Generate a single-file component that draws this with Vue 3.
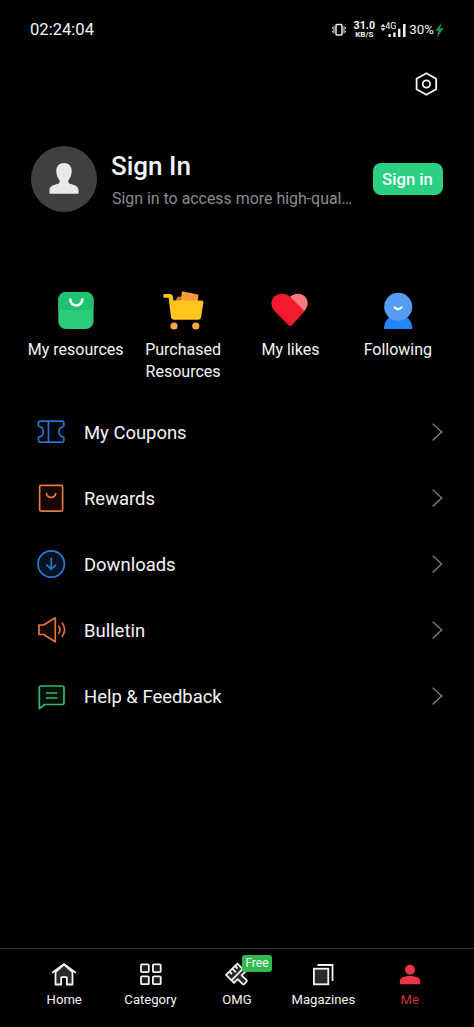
<script setup>
const shortcuts = [
  { id: 'resources', label: 'My resources' },
  { id: 'purchased', label: 'Purchased Resources' },
  { id: 'likes', label: 'My likes' },
  { id: 'following', label: 'Following' },
]
const menu = [
  { id: 'coupons', label: 'My Coupons' },
  { id: 'rewards', label: 'Rewards' },
  { id: 'downloads', label: 'Downloads' },
  { id: 'bulletin', label: 'Bulletin' },
  { id: 'help', label: 'Help & Feedback' },
]
const tabs = [
  { id: 'home', label: 'Home' },
  { id: 'category', label: 'Category' },
  { id: 'omg', label: 'OMG', badge: 'Free' },
  { id: 'magazines', label: 'Magazines' },
  { id: 'me', label: 'Me', active: true },
]
</script>

<template>
  <div class="screen">
    <header class="status">
      <span class="clock">02:24:04</span>
      <div class="indicators">
        <svg class="vibrate" width="14" height="14" viewBox="0 0 14 14" fill="none" stroke="#eee">
          <rect x="4" y="1.5" width="6" height="10.6" rx="1" stroke-width="1.5" />
          <path d="M2 3.2v7.200M12 3.200v7.200M.6 4.200v1.600M.6 7.800v1.600M13.400 4.200v1.600M13.400 7.800v1.600" stroke-width="1" />
        </svg>
        <div class="speed"><b>31.0</b><b class="unit">KB/S</b></div>
        <div class="cell">
          <svg width="27" height="16" viewBox="0 0 27 16" fill="#eee">
            <path d="M.5 4.800 3 2l2.500 2.800zM.5 6.200h5L3 9z" />
            <path d="M8.400 12h2.400v3H8.400zM13.200 10.500h2.400V15h-2.400zM18 6.800h2.400V15H18zM23 2h2.600v13H23z" />
          </svg>
          <span class="gen">4G</span>
        </div>
        <span class="battery">30%</span>
        <svg class="bolt" width="9" height="16" viewBox="0 0 9 16"><path d="M6.800.8.3 8.800h3.200L2 15.400 8.700 6.300H5.200z" fill="#238a4c" /></svg>
      </div>
    </header>

    <div class="toolbar">
      <svg width="28" height="28" viewBox="0 0 28 28" fill="none" stroke="#f4f4f4" stroke-width="1.800" stroke-linejoin="round">
        <path d="M14.400 3.200 24.200 8.700v10.600L14.400 24.800 4.600 19.300V8.700z" />
        <circle cx="14.400" cy="14" r="3.700" />
      </svg>
    </div>

    <section class="profile">
      <div class="avatar">
        <svg width="66" height="66" viewBox="0 0 66 66" fill="#e9e9e9">
          <path d="M33 17.100c4.800 0 7.700 3.300 7.700 8 0 3.800-1.200 7-3.300 9.200v1.700c0 1.100 1 1.700 2.400 2.100 4.800 1.300 7.700 2.600 7.700 6.300v3.400h-29v-3.400c0-3.700 2.900-5 7.700-6.300 1.400-.4 2.400-1 2.400-2.100v-1.700c-2.100-2.200-3.300-5.400-3.300-9.200 0-4.700 2.900-8 7.700-8z" />
        </svg>
      </div>
      <div class="identity">
        <h1>Sign In</h1>
        <p>Sign in to access more high-qual…</p>
      </div>
      <button class="signin">Sign in</button>
    </section>

    <nav class="shortcuts">
      <a v-for="s in shortcuts" :key="s.id" class="shortcut">
        <svg width="44" height="44" viewBox="0 0 44 44">
          <template v-if="s.id === 'resources'">
            <rect x="4.300" y="4" width="35.200" height="37" rx="7.500" fill="#2bcd7d" />
            <path d="M4.300 22V11.500A7.500 7.500 0 0 1 11.800 4H32a7.500 7.500 0 0 1 7.500 7.500V22z" fill="#20c171" />
            <path d="M16.300 11.500a6 6 0 0 0 12 0" fill="none" stroke="#f1fff6" stroke-width="2.600" stroke-linecap="round" />
          </template>
          <template v-else-if="s.id === 'purchased'">
            <path d="m14.500 12.500 2-3.700 5-.3v7h-7z" fill="#c87728" />
            <path d="m22 3.400 14.800 3a1 1 0 0 1 .8 1.200L36 16H19.500l1.300-11.800a1 1 0 0 1 1.200-.8z" fill="#f59b3c" />
            <path d="M3.400 6H9q2.500 0 2.900 2.700l.5 3.800h28q2.300 0 2 2.300l-2.300 14.400q-.4 2.600-3 2.600H13.200q-2.700 0-3.200-2.700L7.600 9.800H3.400q-1 0-1-1V7q0-1 1-1z" fill="#ffc51d" />
            <circle cx="13" cy="38" r="3.600" fill="#f7a64a" /><circle cx="34.800" cy="38" r="3.600" fill="#f7a64a" />
          </template>
          <template v-else-if="s.id === 'likes'">
            <path d="M20.500 10.500C25.500 3.800 35 4.500 38.500 10.500c2.300 4.300 1 8.700-1.800 12L33 26z" fill="#fb7880" />
            <path d="M22.200 8.800 36.600 23.200 24.200 36.900q-1.900 1.900-3.800 0L7 23.500C-.5 15.800 4.800 5.800 13.500 5.800c3.300 0 6.500 1 8.700 3z" fill="#f21b2e" />
          </template>
          <template v-else>
            <path d="M8 41c0-8.300 5-14.500 14-14.500S36.400 32.700 36.400 41z" fill="#2087f5" />
            <circle cx="22.200" cy="18.800" r="14" fill="#579df5" />
            <path d="M18.800 19.500q3.300 3.300 6.700 0" fill="none" stroke="#fff" stroke-width="2.300" stroke-linecap="round" />
          </template>
        </svg>
        <span>{{ s.label }}</span>
      </a>
    </nav>

    <ul class="menu">
      <li v-for="m in menu" :key="m.id">
        <svg width="32" height="32" viewBox="0 0 32 32" fill="none" stroke-width="1.700" stroke-linejoin="round" stroke-linecap="round">
          <path v-if="m.id === 'coupons'" d="M13.500 5.200v21M5 5.200h22.300q1.500 0 1.500 1.500v3.500c-6.500 1.600-6.500 9.400 0 11v3.500q0 1.500-1.500 1.500H5q-1.500 0-1.500-1.500v-3.500c6.500-1.600 6.500-9.400 0-11V6.700q0-1.500 1.500-1.500z" fill="#02060d" stroke="#2e6fcc" />
          <g v-else-if="m.id === 'rewards'" stroke="#e8773f">
            <rect x="4.600" y="3.300" width="23" height="25.800" rx="1.500" fill="#140601" />
            <path d="M11.500 11.700a4.700 4.700 0 0 0 9.200 0" />
          </g>
          <g v-else-if="m.id === 'downloads'" stroke="#2c78d5">
            <circle cx="16.200" cy="16" r="13.200" fill="#061322" />
            <path d="M16.200 10.300v11M11.800 17 16.200 21.300l4.400-4.300" />
          </g>
          <g v-else-if="m.id === 'bulletin'" stroke="#e8733d">
            <path d="M4 11h4.600L20.300 3.800v24L8.600 20.500H4z" fill="#140601" />
            <path d="M23.800 12.300q2.400 3.500 0 7M27.300 9.300q4.500 6.500 0 13" />
          </g>
          <g v-else stroke="#36b671">
            <path d="M6 6h21.500q1.500 0 1.500 1.500V23q0 1.500-1.500 1.500H9.800L4.300 28.700V7.500Q4.300 6 6 6z" fill="#021007" />
            <path d="M11.600 13h10M11.600 18h10" />
          </g>
        </svg>
        <span>{{ m.label }}</span>
        <svg class="chevron" width="12" height="20" viewBox="0 0 12 20" fill="none" stroke="#747474" stroke-width="1.500"><path d="M1.700 1.800 10.700 10l-9 8.400" /></svg>
      </li>
    </ul>

    <footer class="tabs">
      <a v-for="t in tabs" :key="t.id" :class="['tab', { active: t.active }]">
        <div class="glyph">
          <svg width="28" height="28" viewBox="0 0 28 28" fill="none" stroke="#f4f4f4" stroke-width="1.800" stroke-linejoin="round">
            <template v-if="t.id === 'home'">
              <path d="M5.500 12v12.500h5.700v-7.300h5.600v7.300h5.700V12L14 4.500z" fill="#292929" />
              <path d="M2.200 12.800 14 4l11.800 8.800" fill="none" stroke-linejoin="miter" />
            </template>
            <g v-else-if="t.id === 'category'" fill="#1d1d1d">
              <rect x="4" y="4.300" width="7.800" height="7.800" rx="1" /><rect x="15.900" y="4.300" width="7.800" height="7.800" rx="1" />
              <rect x="4" y="16.400" width="7.800" height="7.800" rx="1" /><rect x="15.900" y="16.400" width="7.800" height="7.800" rx="1" />
            </g>
            <g v-else-if="t.id === 'omg'" transform="translate(14 14.500) rotate(-45)">
              <path d="M-8-7.500H8V3.800H2.700V10.800q0 1-1 1H-1.700q-1 0-1-1V3.800H-8z" fill="#292929" />
              <path d="M-8 .2H8M-3.200-7.500v3.600M.8-7.500v5M4.600-7.500v3.600" />
            </g>
            <template v-else-if="t.id === 'magazines'">
              <rect x="4.900" y="8.700" width="14.400" height="15.600" fill="#292929" stroke-linejoin="miter" />
              <path d="M8.500 5h15v16" stroke-linejoin="miter" />
            </template>
            <g v-else fill="#e93546" stroke="none">
              <circle cx="14" cy="9.700" r="5" />
              <path d="M3.800 24.300v-3.500c0-3.500 5-4.900 10.200-4.900s10.200 1.400 10.200 4.900v3.500z" />
            </g>
          </svg>
          <span v-if="t.badge" class="badge">{{ t.badge }}</span>
        </div>
        <span>{{ t.label }}</span>
      </a>
    </footer>
  </div>
</template>

<style>
body { margin: 0; background: #000; }
</style>

<style scoped>
.screen { width: 474px; height: 1027px; display: flex; flex-direction: column; background: #000; color: #f4f4f4; font-family: Roboto, "Liberation Sans", sans-serif; overflow: hidden; }
svg { display: block; flex: none; }
.status { height: 59px; display: flex; justify-content: space-between; align-items: center; padding: 0 30px; }
.clock { font-size: 16.600px; line-height: 20px; }
.indicators { display: flex; align-items: center; }
.speed { display: flex; flex-direction: column; align-items: center; width: 24px; margin-left: 6px; font-size: 10.700px; line-height: 10px; }
.unit { font-size: 8px; line-height: 8px; }
.cell { position: relative; margin-left: 4px; }
.gen { position: absolute; left: 5px; top: 0; font-size: 9px; line-height: 9px; }
.battery { margin-left: 2px; font-size: 13.300px; line-height: 18px; }
.bolt { margin-left: 1px; }
.toolbar { height: 50px; display: flex; justify-content: flex-end; align-items: center; padding: 0 34px; box-sizing: border-box; }
.profile { height: 66px; margin: 37px 31px 0; display: flex; align-items: center; }
.avatar { width: 66px; height: 66px; border-radius: 50%; background: #404040; flex: none; }
.identity { width: 261px; margin: 2px 0 0 14px; flex: none; }
h1 { margin: 0; font-size: 26px; line-height: 32px; font-weight: 500; }
p { margin: 6px 0 0 1px; font-size: 15.920px; line-height: 22px; color: #8c8c8c; white-space: nowrap; }
.signin { width: 70px; height: 32px; margin-left: .5px; padding: 1px 0 0; border: 0; border-radius: 8px; background: #2bd082; color: #f3fff8; font: 500 16.700px/31px Roboto, "Liberation Sans", sans-serif; flex: none; }
.shortcuts { display: grid; grid-template-columns: repeat(4, 107.400px); margin: 76px 0 0 22px; height: 111px; }
.shortcut { display: flex; flex-direction: column; align-items: center; }
.shortcut span { margin-top: 7px; font-size: 16px; line-height: 22px; text-align: center; width: 100px; }
.menu { list-style: none; margin: 0; padding: 0; }
.menu li { height: 65.900px; display: flex; align-items: center; padding: 0 31px 0 35px; }
.menu span { margin: 2px 0 0 17px; flex: 1; font-size: 18.450px; line-height: 24px; }
.tabs { margin-top: auto; height: 79px; box-sizing: border-box; border-top: 1px solid #303030; display: flex; padding: 11px 21px 0; }
.tab { width: 86.400px; display: flex; flex-direction: column; align-items: center; font-size: 13.100px; line-height: 18px; }
.tab > span { margin-top: 3px; }
.glyph { position: relative; }
.active { color: #cf3341; }
.badge { position: absolute; left: 19px; top: -5px; width: 30px; height: 17px; border-radius: 3px; background: #2fb950; color: #f1fff3; font-size: 12px; line-height: 17px; text-align: center; }
</style>
